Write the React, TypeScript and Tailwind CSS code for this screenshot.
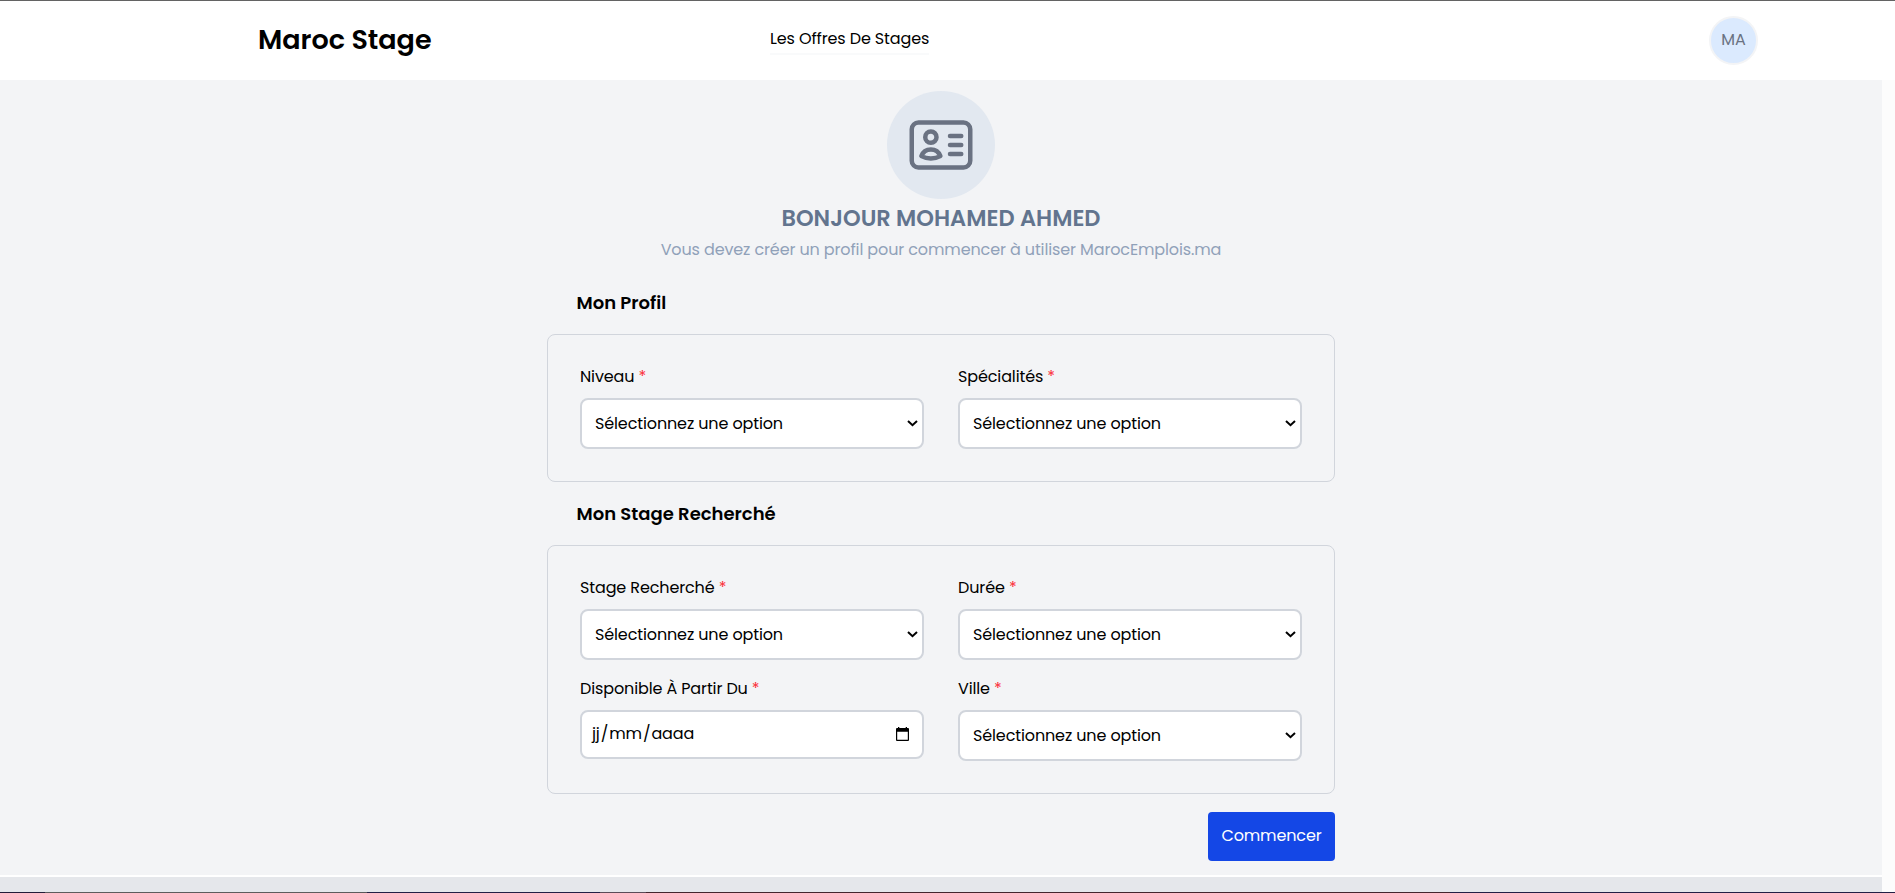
import type { ReactNode } from "react";

function IdentificationIcon() {
  return (
    <svg className="size-[72px] text-gray-500" viewBox="0 0 24 24" fill="none" stroke="currentColor" strokeWidth={1.5} strokeLinecap="round" strokeLinejoin="round">
      <path d="M15 9h3.75M15 12h3.75M15 15h3.75M4.5 19.5h15a2.25 2.25 0 0 0 2.25-2.25V6.75A2.25 2.25 0 0 0 19.5 4.5h-15a2.25 2.25 0 0 0-2.25 2.25v10.5A2.25 2.25 0 0 0 4.5 19.5Zm6-10.125a1.875 1.875 0 1 1-3.75 0 1.875 1.875 0 0 1 3.75 0Zm1.294 6.336a6.721 6.721 0 0 1-3.17.789 6.721 6.721 0 0 1-3.168-.789 3.376 3.376 0 0 1 6.338 0Z" />
    </svg>
  );
}

function Field({ label, children }: { label: string; children: ReactNode }) {
  return (
    <div className="flex h-[101px] flex-col">
      <label className="h-[33px] leading-6">
        {label} <span className="text-red-500">*</span>
      </label>
      {children}
    </div>
  );
}

function SelectField({ label }: { label: string }) {
  return (
    <Field label={label}>
      <div className="relative">
        <select className="block h-[51px] w-full appearance-none rounded-lg border-2 border-gray-300 bg-white pt-px pl-[13px] tracking-[-0.125px] text-black">
          <option>Sélectionnez une option</option>
        </select>
        <svg className="pointer-events-none absolute top-[22px] right-[6px] h-[7px] w-[11px]" viewBox="0 0 11 7" fill="none" stroke="currentColor" strokeWidth={2}>
          <path d="M1 1l4.5 4.2L10 1" />
        </svg>
      </div>
    </Field>
  );
}

function DateField({ label }: { label: string }) {
  return (
    <Field label={label}>
      <div className="flex h-[49px] w-full items-center justify-between rounded-lg border-2 border-gray-300 bg-white pr-[13px] pl-2.5">
        <span className="pb-px">
          jj<span className="mx-px">/</span>mm<span className="mx-px">/</span>aaaa
        </span>
        <svg className="mb-0.5 h-[14px] w-[13px]" viewBox="0 0 13 14" fill="currentColor">
          <path fillRule="evenodd" d="M2 0h1.3v1h6.4V0H11v1h1q1 0 1 1v11q0 1-1 1H1q-1 0-1-1V2q0-1 1-1h1zM1.2 4.8v8h10.6v-8z" />
        </svg>
      </div>
    </Field>
  );
}

function Section({ title, children }: { title: string; children: ReactNode }) {
  return (
    <section>
      <h2 className="pl-[29.5px] text-lg leading-7 font-semibold tracking-normal">{title}</h2>
      <div className="mt-[17px] grid grid-cols-2 gap-x-[34px] rounded-lg border border-gray-300 px-8 pt-[30px] pb-[15px]">{children}</div>
    </section>
  );
}

export default function App() {
  return (
    <div className="flex h-[893px] w-full flex-col overflow-hidden border-t border-[#636363] bg-white font-['Poppins','Inter',sans-serif] text-base tracking-[-0.125px] text-black">
      <header className="flex h-[79px] shrink-0 items-center pr-[137px] pl-[258px]">
        <div className="w-[512px] pb-px text-[27px] leading-8 font-semibold tracking-normal">Maroc Stage</div>
        <a className="mb-0.5 border-b-2 border-gray-50 leading-7">Les Offres De Stages</a>
        <div className="ml-auto flex size-[49px] items-center justify-center rounded-full border-2 border-gray-100 bg-blue-100 pb-px text-gray-500">MA</div>
      </header>
      <div className="flex min-h-0 flex-1 bg-[#fcfcfc]">
        <div className="flex w-[1882px] flex-col bg-white">
          <main className="flex h-[795px] shrink-0 flex-col items-center bg-gray-100 pt-[11px]">
            <div className="flex size-[108px] shrink-0 items-center justify-center rounded-full bg-slate-200">
              <IdentificationIcon />
            </div>
            <h1 className="mt-[3px] text-[22.5px] leading-8 font-semibold tracking-normal text-slate-500">BONJOUR MOHAMED AHMED</h1>
            <p className="mt-1 leading-6 text-slate-400">Vous devez créer un profil pour commencer à utiliser MarocEmplois.ma</p>
            <form className="mt-[27px] flex w-[788px] flex-col">
              <Section title="Mon Profil">
                <SelectField label="Niveau" />
                <SelectField label="Spécialités" />
              </Section>
              <div className="h-[18px]" />
              <Section title="Mon Stage Recherché">
                <SelectField label="Stage Recherché" />
                <SelectField label="Durée" />
                <DateField label="Disponible À Partir Du" />
                <SelectField label="Ville" />
              </Section>
              <button type="button" className="mt-[18px] h-[49px] w-[127px] self-end rounded bg-[#1447e6] pb-0.5 tracking-[-0.125px] text-white">Commencer</button>
            </form>
          </main>
          <div className="mt-0.5 flex-1 bg-gray-200" />
        </div>
      </div>
      <div className="flex h-px shrink-0 bg-[#221f45]">
        <div className="w-[45px] bg-[#221c38]" />
        <div className="w-[322px] bg-[#5c5c5c]" />
        <div className="w-[233px] bg-[#221f45]" />
        <div className="w-[46px] bg-[#5a4c58]" />
        <div className="w-[804px] bg-[#43262d]" />
      </div>
    </div>
  );
}
